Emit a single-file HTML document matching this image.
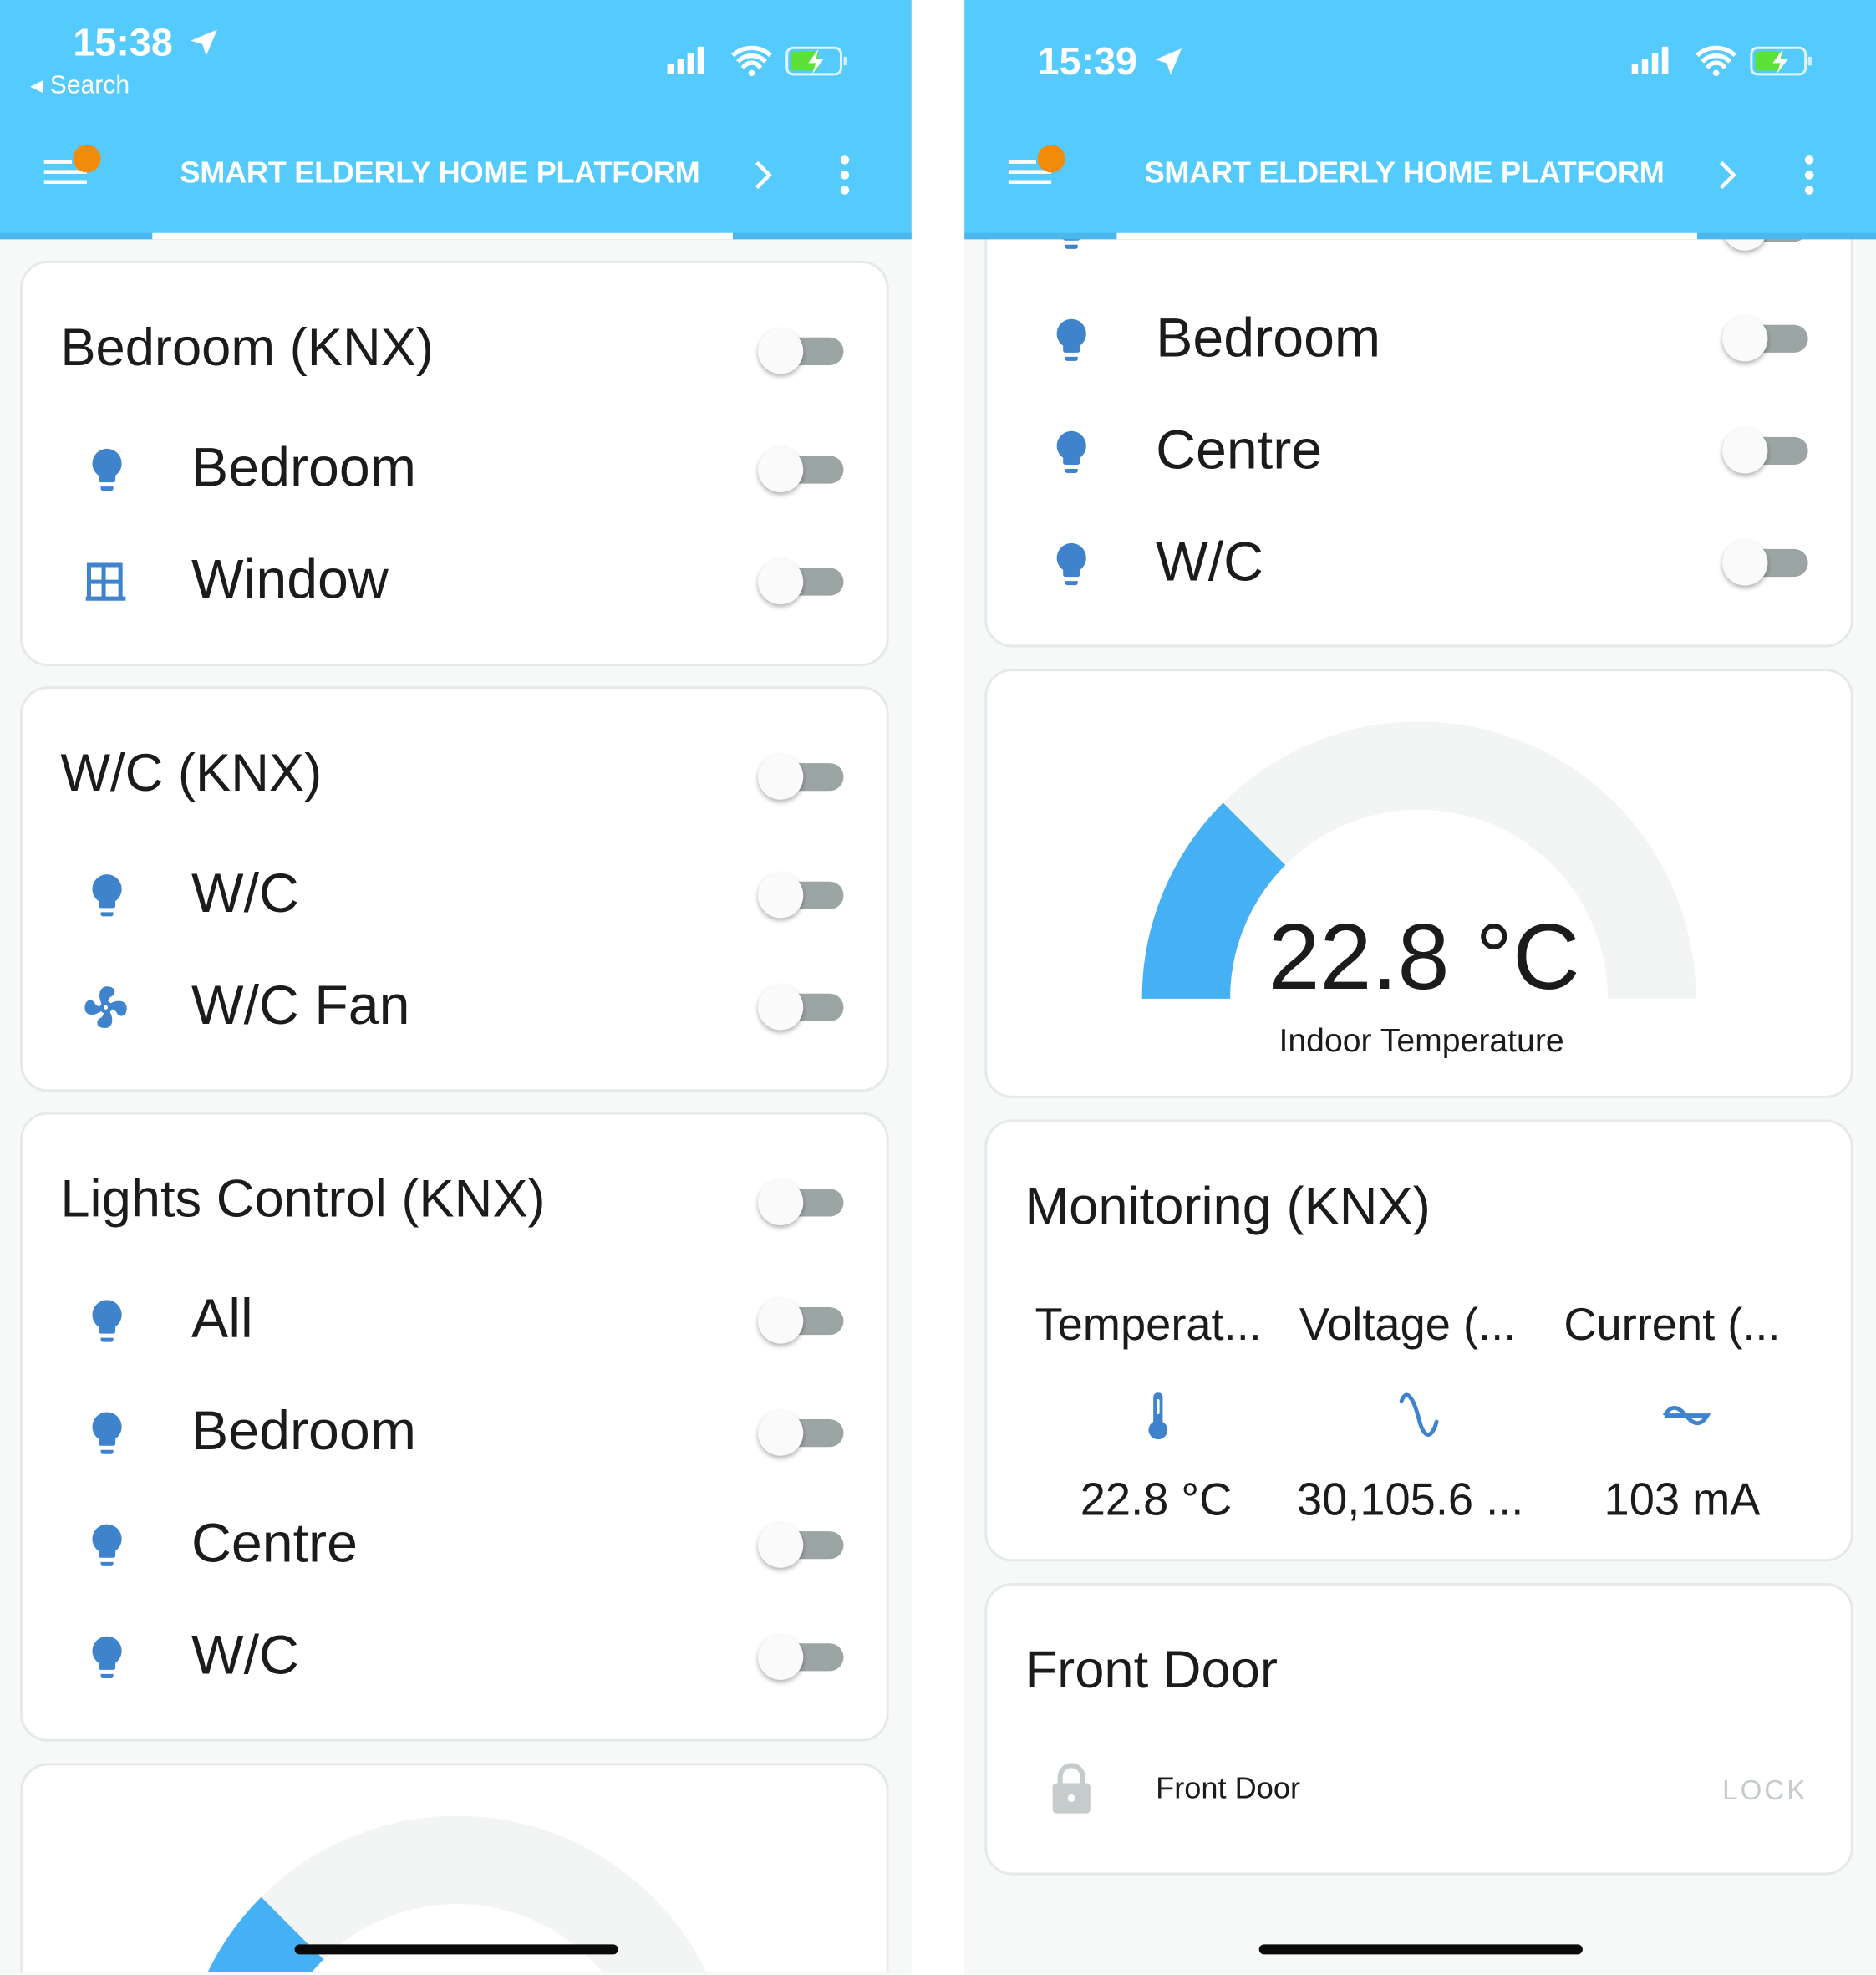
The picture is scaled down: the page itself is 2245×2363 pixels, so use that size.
<!DOCTYPE html>
<html><head><meta charset="utf-8"><style>
html,body{margin:0;padding:0;width:2245px;height:2362px;overflow:hidden;background:#fff}
#s{position:absolute;left:0;top:0;width:1490px;height:1568px;transform:scale(1.50671);transform-origin:0 0;font-family:"Liberation Sans",Arial,sans-serif;color:#1b1b1b;overflow:hidden}
.ph{position:absolute;top:0;width:724px;height:1568px;background:#f7f8f8;overflow:hidden}
.hd{position:absolute;left:0;top:0;width:724px;height:190px;background:#55cafd;z-index:5}
.hd .ul{position:absolute;left:0;top:185px;width:724px;height:5px;background:#4ab8ee}
.hd .ul2{position:absolute;left:121px;top:185px;width:461px;height:5px;background:#fff}
.t{position:absolute;color:#fff;font-weight:bold;font-size:24px;top:124px;left:143px;letter-spacing:-0.2px}
.card{position:absolute;left:16px;width:690px;background:#fff;border:2px solid #e6e9e9;border-radius:22px;box-sizing:border-box}
.tx{position:absolute;white-space:nowrap;line-height:1}
.tg{position:absolute;width:70px;height:40px}
.tg:before{content:"";position:absolute;left:18px;top:9px;width:50px;height:22px;border-radius:11px;background:#9ba5a4}
.tg:after{content:"";position:absolute;left:0;top:2px;width:36px;height:36px;border-radius:50%;background:#fafafa;box-shadow:0 2px 4px rgba(0,0,0,.3)}
.ic{position:absolute;width:40px;height:40px}
.bar{position:absolute;width:257px;height:8px;border-radius:4px;background:#0a0a0a;z-index:6}
.r{font-size:44px}
</style></head><body><div id="s">

<!-- LEFT PHONE -->
<div class="ph" style="left:0">
 <div class="hd">
  <div class="tx" style="left:58px;top:18px;color:#fff;font-size:31px;font-weight:bold">15:38</div>
  <svg style="position:absolute;left:148px;top:20px" width="28" height="28" viewBox="0 0 24 24"><path d="M21 3L3 10.5l8 2.5 2.5 8z" fill="#fff"/></svg>
  <div class="tx" style="left:24px;top:58px;color:#fff;font-size:20px">◂ Search</div>
  <svg style="position:absolute;left:528px;top:34px" width="150" height="28" viewBox="0 0 150 28">
   <rect x="2" y="17" width="5" height="8" rx="1" fill="#fff"/><rect x="10" y="13" width="5" height="12" rx="1" fill="#fff"/><rect x="18" y="8" width="5" height="17" rx="1" fill="#fff"/><rect x="26" y="3" width="5" height="22" rx="1" fill="#fff"/>
   <path d="M54 10a22 22 0 0 1 30 0M58 15a15 15 0 0 1 22 0M62 20a8 8 0 0 1 14 0" stroke="#fff" stroke-width="3.5" fill="none"/><circle cx="69" cy="24" r="2.5" fill="#fff"/>
   <rect x="97" y="4" width="43" height="21" rx="5" fill="none" stroke="#fff" stroke-width="2" opacity=".8"/><rect x="100" y="7" width="22" height="15" rx="2" fill="#5ce03a"/><rect x="142" y="11" width="3" height="7" rx="1" fill="#fff" opacity=".7"/>
   <path d="M122 5l-8 11h6l-3 9 9-12h-6z" fill="#fff"/>
  </svg>
  <svg style="position:absolute;left:34px;top:114px" width="50" height="38" viewBox="0 0 50 38"><rect x="1" y="13" width="22" height="3" fill="#fff"/><rect x="1" y="21" width="34" height="3" fill="#fff"/><rect x="1" y="29" width="34" height="3" fill="#fff"/><circle cx="35" cy="12" r="11" fill="#f28a0a"/></svg>
  <div class="t">SMART ELDERLY HOME PLATFORM</div>
  <svg style="position:absolute;left:596px;top:126px" width="20" height="26" viewBox="0 0 20 26"><path d="M5 3l10 10-10 10" stroke="#fff" stroke-width="3" fill="none"/></svg>
  <svg style="position:absolute;left:664px;top:122px" width="14" height="34" viewBox="0 0 14 34"><circle cx="7" cy="5" r="3.5" fill="#fff"/><circle cx="7" cy="17" r="3.5" fill="#fff"/><circle cx="7" cy="29" r="3.5" fill="#fff"/></svg>
  <div class="ul"></div><div class="ul2"></div>
 </div>

 <div class="card" style="top:207px;height:322px">
  <div class="tx" style="left:30px;top:46px;font-size:42px">Bedroom (KNX)</div>
  <div class="tg" style="left:584px;top:50px"></div>
  <svg class="ic" style="left:47px;top:144px" viewBox="0 0 24 24"><path fill="#3f83cd" d="M12,2A7,7 0 0,0 5,9C5,11.38 6.19,13.47 8,14.74V17A1,1 0 0,0 9,18H15A1,1 0 0,0 16,17V14.74C17.81,13.47 19,11.38 19,9A7,7 0 0,0 12,2M9,21A1,1 0 0,0 10,22H14A1,1 0 0,0 15,21V20H9V21Z"/></svg>
  <div class="tx r" style="left:134px;top:141px">Bedroom</div>
  <div class="tg" style="left:584px;top:144px"></div>
  <svg class="ic" style="left:46px;top:233px" viewBox="0 0 24 24"><path fill="#3f83cd" d="M3 3h17v16h1.5v2H2.5v-2H3zM5 5v6h5V5zm7 0v6h6V5zM5 13v6h5v-6zm7 0v6h6v-6z"/></svg>
  <div class="tx r" style="left:134px;top:230px">Window</div>
  <div class="tg" style="left:584px;top:233px"></div>
 </div>

 <div class="card" style="top:545px;height:322px">
  <div class="tx" style="left:30px;top:46px;font-size:42px">W/C (KNX)</div>
  <div class="tg" style="left:584px;top:50px"></div>
  <svg class="ic" style="left:47px;top:144px" viewBox="0 0 24 24"><path fill="#3f83cd" d="M12,2A7,7 0 0,0 5,9C5,11.38 6.19,13.47 8,14.74V17A1,1 0 0,0 9,18H15A1,1 0 0,0 16,17V14.74C17.81,13.47 19,11.38 19,9A7,7 0 0,0 12,2M9,21A1,1 0 0,0 10,22H14A1,1 0 0,0 15,21V20H9V21Z"/></svg>
  <div class="tx r" style="left:134px;top:141px">W/C</div>
  <div class="tg" style="left:584px;top:144px"></div>
  <svg class="ic" style="left:46px;top:233px" viewBox="0 0 24 24"><path fill="#3f83cd" d="M12 11a1 1 0 1 0 0 2 1 1 0 0 0 0-2m.5-9c4.5 0 4.6 3.6 2.2 4.8-1 .5-1.4 1.4-1.6 2.3.5.2.9.5 1.2.9 3.7-2 7.7-1.2 7.7 2.3 0 4.5-3.600 4.6-4.8 2.2-.5-1-1.4-1.4-2.3-1.6-.2.5-.5.9-.9 1.2 2 3.7 1.2 7.7-2.3 7.7-4.5 0-4.6-3.6-2.2-4.8 1-.5 1.4-1.4 1.5-2.3-.5-.2-.9-.5-1.2-.9C6.1 16.5 2 15.8 2 12.3c0-4.5 3.6-4.6 4.8-2.3.5 1 1.4 1.4 2.3 1.5.2-.5.5-.9.9-1.2C8.1 6.6 9 2 12.5 2z"/></svg>
  <div class="tx r" style="left:134px;top:230px">W/C Fan</div>
  <div class="tg" style="left:584px;top:233px"></div>
 </div>

 <div class="card" style="top:883px;height:500px">
  <div class="tx" style="left:30px;top:46px;font-size:42px">Lights Control (KNX)</div>
  <div class="tg" style="left:584px;top:50px"></div>
  <svg class="ic" style="left:47px;top:144px" viewBox="0 0 24 24"><path fill="#3f83cd" d="M12,2A7,7 0 0,0 5,9C5,11.38 6.19,13.47 8,14.74V17A1,1 0 0,0 9,18H15A1,1 0 0,0 16,17V14.74C17.81,13.47 19,11.38 19,9A7,7 0 0,0 12,2M9,21A1,1 0 0,0 10,22H14A1,1 0 0,0 15,21V20H9V21Z"/></svg>
  <div class="tx r" style="left:134px;top:141px">All</div>
  <div class="tg" style="left:584px;top:144px"></div>
  <svg class="ic" style="left:47px;top:233px" viewBox="0 0 24 24"><path fill="#3f83cd" d="M12,2A7,7 0 0,0 5,9C5,11.38 6.19,13.47 8,14.74V17A1,1 0 0,0 9,18H15A1,1 0 0,0 16,17V14.74C17.81,13.47 19,11.38 19,9A7,7 0 0,0 12,2M9,21A1,1 0 0,0 10,22H14A1,1 0 0,0 15,21V20H9V21Z"/></svg>
  <div class="tx r" style="left:134px;top:230px">Bedroom</div>
  <div class="tg" style="left:584px;top:233px"></div>
  <svg class="ic" style="left:47px;top:322px" viewBox="0 0 24 24"><path fill="#3f83cd" d="M12,2A7,7 0 0,0 5,9C5,11.38 6.19,13.47 8,14.74V17A1,1 0 0,0 9,18H15A1,1 0 0,0 16,17V14.74C17.81,13.47 19,11.38 19,9A7,7 0 0,0 12,2M9,21A1,1 0 0,0 10,22H14A1,1 0 0,0 15,21V20H9V21Z"/></svg>
  <div class="tx r" style="left:134px;top:319px">Centre</div>
  <div class="tg" style="left:584px;top:322px"></div>
  <svg class="ic" style="left:47px;top:411px" viewBox="0 0 24 24"><path fill="#3f83cd" d="M12,2A7,7 0 0,0 5,9C5,11.38 6.19,13.47 8,14.74V17A1,1 0 0,0 9,18H15A1,1 0 0,0 16,17V14.74C17.81,13.47 19,11.38 19,9A7,7 0 0,0 12,2M9,21A1,1 0 0,0 10,22H14A1,1 0 0,0 15,21V20H9V21Z"/></svg>
  <div class="tx r" style="left:134px;top:408px">W/C</div>
  <div class="tg" style="left:584px;top:411px"></div>
 </div>

 <div class="card" style="top:1400px;height:166px;border-bottom:none;border-bottom-left-radius:0;border-bottom-right-radius:0;overflow:hidden">
  <svg style="position:absolute;left:125px;top:40px" width="440" height="222" viewBox="0 0 440 222">
   <path d="M35 220A185 185 0 0 1 405 220" stroke="#f3f4f4" stroke-width="70" fill="none"/>
   <path d="M35 220A185 185 0 0 1 89.2 89.2" stroke="#45b0f3" stroke-width="70" fill="none"/>
  </svg>
 </div>
 <div class="bar" style="left:234px;top:1544px"></div>
</div>

<!-- RIGHT PHONE -->
<div class="ph" style="left:766px">
 <div class="hd">
  <div class="tx" style="left:58px;top:33px;color:#fff;font-size:31px;font-weight:bold">15:39</div>
  <svg style="position:absolute;left:148px;top:35px" width="28" height="28" viewBox="0 0 24 24"><path d="M21 3L3 10.5l8 2.5 2.5 8z" fill="#fff"/></svg>
  <svg style="position:absolute;left:528px;top:34px" width="150" height="28" viewBox="0 0 150 28">
   <rect x="2" y="17" width="5" height="8" rx="1" fill="#fff"/><rect x="10" y="13" width="5" height="12" rx="1" fill="#fff"/><rect x="18" y="8" width="5" height="17" rx="1" fill="#fff"/><rect x="26" y="3" width="5" height="22" rx="1" fill="#fff"/>
   <path d="M54 10a22 22 0 0 1 30 0M58 15a15 15 0 0 1 22 0M62 20a8 8 0 0 1 14 0" stroke="#fff" stroke-width="3.5" fill="none"/><circle cx="69" cy="24" r="2.5" fill="#fff"/>
   <rect x="97" y="4" width="43" height="21" rx="5" fill="none" stroke="#fff" stroke-width="2" opacity=".8"/><rect x="100" y="7" width="22" height="15" rx="2" fill="#5ce03a"/><rect x="142" y="11" width="3" height="7" rx="1" fill="#fff" opacity=".7"/>
   <path d="M122 5l-8 11h6l-3 9 9-12h-6z" fill="#fff"/>
  </svg>
  <svg style="position:absolute;left:34px;top:114px" width="50" height="38" viewBox="0 0 50 38"><rect x="1" y="13" width="22" height="3" fill="#fff"/><rect x="1" y="21" width="34" height="3" fill="#fff"/><rect x="1" y="29" width="34" height="3" fill="#fff"/><circle cx="35" cy="12" r="11" fill="#f28a0a"/></svg>
  <div class="t">SMART ELDERLY HOME PLATFORM</div>
  <svg style="position:absolute;left:596px;top:126px" width="20" height="26" viewBox="0 0 20 26"><path d="M5 3l10 10-10 10" stroke="#fff" stroke-width="3" fill="none"/></svg>
  <svg style="position:absolute;left:664px;top:122px" width="14" height="34" viewBox="0 0 14 34"><circle cx="7" cy="5" r="3.5" fill="#fff"/><circle cx="7" cy="17" r="3.5" fill="#fff"/><circle cx="7" cy="29" r="3.5" fill="#fff"/></svg>
  <div class="ul"></div><div class="ul2"></div>
 </div>

 <div class="card" style="top:0px;height:514px">
  <svg class="ic" style="left:47px;top:159px" viewBox="0 0 24 24"><path fill="#3f83cd" d="M12,2A7,7 0 0,0 5,9C5,11.38 6.19,13.47 8,14.74V17A1,1 0 0,0 9,18H15A1,1 0 0,0 16,17V14.74C17.81,13.47 19,11.38 19,9A7,7 0 0,0 12,2M9,21A1,1 0 0,0 10,22H14A1,1 0 0,0 15,21V20H9V21Z"/></svg>
  <div class="tg" style="left:584px;top:159px"></div>
  <svg class="ic" style="left:47px;top:248px" viewBox="0 0 24 24"><path fill="#3f83cd" d="M12,2A7,7 0 0,0 5,9C5,11.38 6.19,13.47 8,14.74V17A1,1 0 0,0 9,18H15A1,1 0 0,0 16,17V14.74C17.81,13.47 19,11.38 19,9A7,7 0 0,0 12,2M9,21A1,1 0 0,0 10,22H14A1,1 0 0,0 15,21V20H9V21Z"/></svg>
  <div class="tx r" style="left:134px;top:245px">Bedroom</div>
  <div class="tg" style="left:584px;top:247px"></div>
  <svg class="ic" style="left:47px;top:337px" viewBox="0 0 24 24"><path fill="#3f83cd" d="M12,2A7,7 0 0,0 5,9C5,11.38 6.19,13.47 8,14.74V17A1,1 0 0,0 9,18H15A1,1 0 0,0 16,17V14.74C17.81,13.47 19,11.38 19,9A7,7 0 0,0 12,2M9,21A1,1 0 0,0 10,22H14A1,1 0 0,0 15,21V20H9V21Z"/></svg>
  <div class="tx r" style="left:134px;top:334px">Centre</div>
  <div class="tg" style="left:584px;top:336px"></div>
  <svg class="ic" style="left:47px;top:426px" viewBox="0 0 24 24"><path fill="#3f83cd" d="M12,2A7,7 0 0,0 5,9C5,11.38 6.19,13.47 8,14.74V17A1,1 0 0,0 9,18H15A1,1 0 0,0 16,17V14.74C17.81,13.47 19,11.38 19,9A7,7 0 0,0 12,2M9,21A1,1 0 0,0 10,22H14A1,1 0 0,0 15,21V20H9V21Z"/></svg>
  <div class="tx r" style="left:134px;top:423px">W/C</div>
  <div class="tg" style="left:584px;top:425px"></div>
 </div>

 <div class="card" style="top:531px;height:341px">
  <svg style="position:absolute;left:123px;top:40px" width="440" height="222" viewBox="0 0 440 222">
   <path d="M35 220A185 185 0 0 1 405 220" stroke="#f3f4f4" stroke-width="70" fill="none"/>
   <path d="M35 220A185 185 0 0 1 89.2 89.2" stroke="#45b0f3" stroke-width="70" fill="none"/>
  </svg>
  <div class="tx" style="left:0;width:690px;text-align:center;top:190px;font-size:74px;padding-left:2px">22.8 °C</div>
  <div class="tx" style="left:0;width:690px;text-align:center;top:280px;font-size:26px">Indoor Temperature</div>
 </div>

 <div class="card" style="top:889px;height:351px">
  <div class="tx" style="left:30px;top:46px;font-size:42px">Monitoring (KNX)</div>
  <div class="tx" style="left:38px;top:143px;font-size:36px">Temperat...</div>
  <div class="tx" style="left:248px;top:143px;font-size:36px">Voltage (...</div>
  <div class="tx" style="left:458px;top:143px;font-size:36px">Current (...</div>
  <svg style="position:absolute;left:117px;top:215px" width="36" height="40" viewBox="0 0 24 26"><path fill="#3f83cd" d="M10 2a2.5 2.5 0 0 1 5 0v13a5 5 0 1 1-5 0z"/><rect x="11.7" y="3" width="1.6" height="8" rx=".8" fill="#fff"/></svg>
  <svg style="position:absolute;left:325px;top:212px" width="42" height="44" viewBox="0 0 42 44"><path d="M4 10c4-12 10-2 14 14s10 16 14 2" stroke="#3f83cd" stroke-width="3.2" fill="none" stroke-linecap="round"/></svg>
  <svg style="position:absolute;left:535px;top:222px" width="42" height="24" viewBox="0 0 42 24"><path d="M3 11c6-10 12-6 17 0s11 10 17 0H3" stroke="#3f83cd" stroke-width="3.2" fill="none"/></svg>
  <div class="tx" style="left:74px;top:282px;font-size:36px">22.8 °C</div>
  <div class="tx" style="left:246px;top:282px;font-size:36px">30,105.6 ...</div>
  <div class="tx" style="left:490px;top:282px;font-size:36px">103 mA</div>
 </div>

 <div class="card" style="top:1257px;height:232px">
  <div class="tx" style="left:30px;top:46px;font-size:42px">Front Door</div>
  <svg style="position:absolute;left:50px;top:141px" width="34" height="42" viewBox="0 0 34 42"><path d="M8 17v-6a9 9 0 0 1 18 0v6" stroke="#c5cccb" stroke-width="4" fill="none"/><rect x="2" y="16" width="30" height="24" rx="3" fill="#c5cccb"/><circle cx="17" cy="28" r="3" fill="#fff"/></svg>
  <div class="tx" style="left:134px;top:150px;font-size:24px">Front Door</div>
  <div class="tx" style="left:584px;top:152px;font-size:22px;color:#c5cccb;letter-spacing:2px">LOCK</div>
 </div>
 <div class="bar" style="left:234px;top:1544px"></div>
</div>

</div></body></html>
